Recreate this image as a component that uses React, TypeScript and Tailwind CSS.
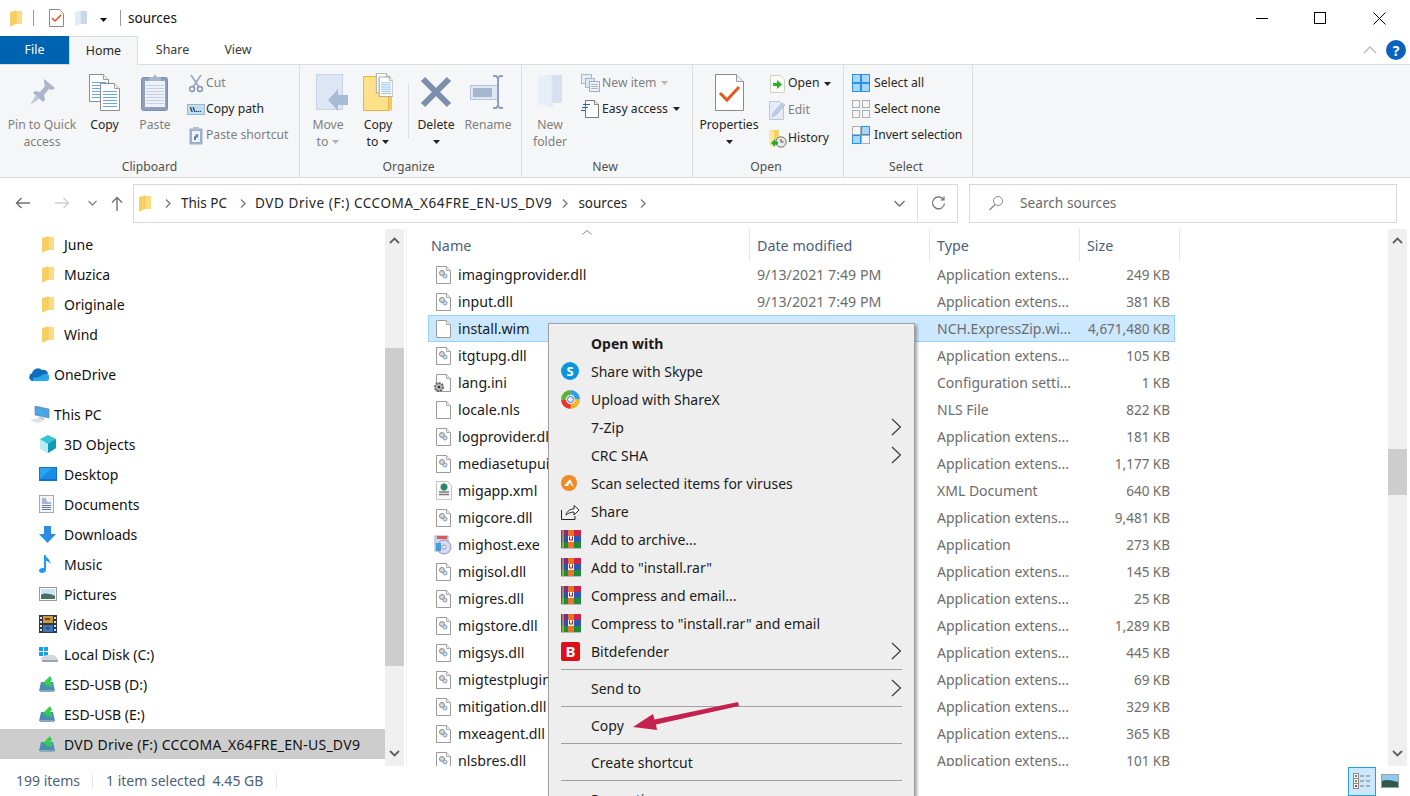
import React from "react";

const Svg = ({ w, h, children, className = "" }: { w: number; h: number; children: React.ReactNode; className?: string }) => (
  <svg width={w} height={h} viewBox={`0 0 ${w} ${h}`} className={`shrink-0 ${className}`}>{children}</svg>
);

const Folder = ({ pale = false }: { pale?: boolean }) => (
  <Svg w={12} h={17}>
    <path d="M3 1h9v13H3z" fill={pale ? "#c9d7ea" : "#fbdc80"} />
    <path d="M0 2l6-1.500V14L1 16.500 0 16z" fill={pale ? "#e3ebf6" : "#f8cf62"} />
    <path d="M6 .5V14" stroke={pale ? "#d5e0ef" : "#f3c85c"} strokeWidth="1" />
  </Svg>
);

const CheckDoc = ({ big = false }: { big?: boolean }) =>
  big ? (
    <Svg w={29} h={37}>
      <path d="M.5.5h21l7 7v29H.500z" fill="#fff" stroke="#8a8a8a" />
      <path d="M21.500.5v7h7" fill="#ececec" stroke="#9a9a9a" />
      <path d="M5 19l7 7L24 13" fill="none" stroke="#e8591b" strokeWidth="3" />
    </Svg>
  ) : (
    <Svg w={15} h={18}>
      <path d="M.5.5h10l4 4v13H.500z" fill="#fff" stroke="#8a8a8a" />
      <path d="M3 9l3 3 6-6" fill="none" stroke="#e8491b" strokeWidth="1.500" />
    </Svg>
  );

const Pin = () => (
  <Svg w={28} h={28}>
    <path d="M16 1l11 9-3 2-3-1-5 6 1 5-2 2-10-9 2-2 5 1 5-6-1-4z" fill="#a9b6cc" />
    <path d="M8 17l4 3-10 7z" fill="#bcc6d8" />
  </Svg>
);

const Doc = ({ x, y }: { x: number; y: number }) => (
  <g transform={`translate(${x} ${y})`}>
    <path d="M.5.5h14l5 5v22H.500z" fill="#fff" stroke="#8d8d8d" />
    <path d="M14.500.5v5h5" fill="#ececec" stroke="#a0a0a0" />
    {[8, 11, 14, 17, 20, 23].map((l) => (
      <path key={l} d={`M3 ${l + 0.5}h14`} stroke="#6aa5ea" />
    ))}
  </g>
);

const CopyBig = () => (
  <Svg w={31} h={37}>
    <Doc x={0} y={0} />
    <Doc x={11} y={9} />
  </Svg>
);

const Clipboard = () => (
  <Svg w={28} h={38}>
    <rect x=".5" y="4.500" width="26" height="33" rx="2" fill="#8ea0bd" stroke="#7c8fae" />
    <rect x="4" y="8" width="20" height="26" fill="#eef1f7" />
    {[12, 15, 18, 21, 24, 27, 30].map((l) => (
      <path key={l} d={`M5 ${l + 0.5}h18`} stroke="#c6d0e2" />
    ))}
    <path d="M8 8V4h4l2-3 2 3h4v4z" fill="#a8b6cd" />
  </Svg>
);

const Scissors = () => (
  <Svg w={14} h={19}>
    <path d="M2 1l8 12M12 1L4 13" stroke="#9aa7bd" strokeWidth="1.600" fill="none" />
    <circle cx="3" cy="15" r="2.500" fill="none" stroke="#8093b3" strokeWidth="1.500" />
    <circle cx="11" cy="15" r="2.500" fill="none" stroke="#8093b3" strokeWidth="1.500" />
  </Svg>
);

const CopyPathIcon = () => (
  <div className="w-[18px] h-[11px] bg-[#bcdff7] border border-[#9cb5d0] flex items-center justify-center overflow-hidden text-[7px] leading-none font-bold text-black">
    \\...
  </div>
);

const PasteShortcut = () => (
  <Svg w={14} h={19}>
    <rect x=".5" y="2.500" width="13" height="16" fill="#9eb0c9" />
    <rect x="3" y="5" width="8" height="11" fill="#eef1f7" />
    <path d="M4 1h6v3H4z" fill="#b3bfd2" />
    <path d="M5 14v-3l2-2h-2l4-1v4l-1-1-1 1v2z" fill="#5d7fb0" />
  </Svg>
);

const MoveTo = () => (
  <Svg w={33} h={37}>
    <rect x=".5" y=".5" width="26" height="35" fill="#dde6f4" stroke="#c7d4e8" />
    <path d="M12 26l10-11v6h10v10H22v6z" fill="#a9bad6" />
  </Svg>
);

const CopyTo = () => (
  <Svg w={30} h={38}>
    <path d="M.5 3.500h25v34H.500z" fill="#fde08a" stroke="#e2b840" />
    <path d="M26 18l3 3v16.500h-3z" fill="#f3c85c" />
    <g transform="translate(13 0) scale(.72)">
      <Doc x={0} y={0} />
      <Doc x={4} y={5} />
    </g>
  </Svg>
);

const DeleteX = () => (
  <Svg w={32} h={32}>
    <path d="M3 3l26 26M29 3L3 29" stroke="#7d8fae" strokeWidth="6" />
  </Svg>
);

const RenameIcon = () => (
  <Svg w={36} h={34}>
    <rect x=".5" y="10.500" width="27" height="14" fill="#dfe7f3" stroke="#b5c4dc" />
    <rect x="3" y="13" width="19" height="9" fill="#a7b6cf" />
    <path d="M23 1h3l2 2 2-2h3M28 3v28M23 33h3l2-2 2 2h3" stroke="#8d9fbd" strokeWidth="2" fill="none" />
  </Svg>
);

const NewFolder = () => (
  <Svg w={25} h={36}>
    <path d="M8 1h16v27h1l-2 1H8z" fill="#d6e0ef" />
    <path d="M0 3l14-2v33L1 30l-1-2z" fill="#e8eef7" />
    <path d="M14 1v33" stroke="#dde6f2" />
  </Svg>
);

const NewItem = () => (
  <Svg w={19} h={18}>
    <rect x=".5" y=".5" width="10" height="9" fill="#e7edf6" stroke="#a9b6ca" />
    <rect x="4.500" y="4.500" width="9" height="9" fill="#dde5f0" stroke="#a9b6ca" />
    <rect x="8.500" y="7.500" width="10" height="10" fill="#eef1f6" stroke="#a0aec4" />
    <path d="M10 10.500h7M10 12.500h7M10 14.500h7" stroke="#a9b6ca" />
  </Svg>
);

const EasyAccess = () => (
  <Svg w={18} h={18}>
    <path d="M4.500.5h9l4 4v13h-13z" fill="#fff" stroke="#777" />
    <path d="M13.500.5v4h4" fill="#ececec" stroke="#888" />
    <path d="M2 4.500h7M1 7.500h6M0 10.500h4" stroke="#1f66b0" strokeWidth="1.200" />
  </Svg>
);

const OpenIcon = () => (
  <Svg w={16} h={18}>
    <path d="M.5.5h10l4 4v13H.500z" fill="#fbfbf4" stroke="#cfcfc8" />
    <path d="M3 8h4V5l5 4.500L7 14v-3H3z" fill="#23b525" />
  </Svg>
);

const EditIcon = () => (
  <Svg w={17} h={19}>
    <path d="M.5.5h10l4 4v14H.500z" fill="#e5ecf7" stroke="#b9c6dc" />
    <path d="M3 16l1-4 9-10 3 2-9 10z" fill="#bccde6" stroke="#a6b7d2" strokeWidth=".6" />
  </Svg>
);

const HistoryIcon = () => (
  <Svg w={18} h={19}>
    <path d="M0 1l10 0v15H0z" fill="#f9cf62" />
    <path d="M0 1l5 1v16l-5-2z" fill="#fde6a4" />
    <circle cx="12" cy="13" r="5.200" fill="#e8e8e8" stroke="#777" />
    <path d="M12 10v3h2.500" stroke="#555" fill="none" />
    <path d="M2 14l4-4v2.500h3v3H6V18z" fill="#27a92a" />
  </Svg>
);

const Grid = ({ on, gap = false }: { on: boolean[]; gap?: boolean }) => (
  <Svg w={18} h={18}>
    {[0, 1, 2, 3].map((i) => {
      const far = gap ? 10.5 : 9.5;
      const size = gap ? 7 : 8;
      const x = i % 2 === 0 ? 0.5 : far;
      const y = i < 2 ? 0.5 : far;
      return <rect key={i} x={x} y={y} width={size} height={size} fill={on[i] ? "#a6d8fb" : "#f5f6f7"} stroke={on[i] ? "#2b91e8" : "#adadad"} />;
    })}
  </Svg>
);

const Caret = ({ color = "#222", className = "" }: { color?: string; className?: string }) => (
  <svg width="7" height="4" viewBox="0 0 7 4" className={`shrink-0 ${className}`}><path d="M0 0h7L3.500 4z" fill={color} /></svg>
);

const Chev = ({ color = "#777" }: { color?: string }) => (
  <svg width="6" height="9" viewBox="0 0 6 9" className="shrink-0"><path d="M1 .5l4 4-4 4" fill="none" stroke={color} strokeWidth="1.300" /></svg>
);

const Big = ({ w, icon, l1, l2, off = false, caret = false }: { w: number; icon: React.ReactNode; l1: string; l2?: string; off?: boolean; caret?: boolean }) => (
  <div className={`flex flex-col items-center shrink-0 ${off ? "text-[#7f7f7f]" : "text-[#262626]"}`} style={{ width: w }}>
    <div className="h-[42px] flex items-center justify-center">{icon}</div>
    <div className="h-[17px] leading-[17px] whitespace-nowrap mt-[3px]">{l1}</div>
    {l2 !== undefined ? (
      <div className="h-[17px] leading-[17px] whitespace-nowrap flex items-center gap-[4px]">
        {l2}
        {caret && <Caret color={off ? "#b0b0b0" : "#222"} />}
      </div>
    ) : (
      caret && <div className="h-[17px] flex items-center"><Caret /></div>
    )}
  </div>
);

const Small = ({ icon, label, off = false, caret, iw = 21, h = 26 }: { icon: React.ReactNode; label: string; off?: boolean; caret?: string; iw?: number; h?: number }) => (
  <div className={`flex items-center whitespace-nowrap ${off ? "text-[#7f7f7f]" : "text-[#262626]"}`} style={{ height: h }}>
    <div className="flex items-center justify-center shrink-0" style={{ width: iw }}>{icon}</div>
    <span>{label}</span>
    {caret && <Caret color={caret} className="ml-[5px]" />}
  </div>
);

const Group = ({ w, label, children, shift = true }: { w: number; label: string; children: React.ReactNode; shift?: boolean }) => (
  <div className="relative flex flex-col h-full shrink-0 border-r border-[#dcdddf]" style={{ width: w }}>
    <div className="flex h-[91px] pt-[6px]">{children}</div>
    <div className={`text-center text-[#4f4f4f] leading-[17px] mt-[2px] ${shift ? "pr-[4px]" : ""}`}>{label}</div>
  </div>
);

const DllIcon = () => (
  <Svg w={15} h={18}>
    <path d="M.5.5h10l4 4v13H.500z" fill="#fff" stroke="#9a9a9a" />
    <path d="M10.500.5v4h4" fill="#eee" stroke="#aaa" />
    <circle cx="6" cy="7" r="2.500" fill="#d6d6d6" stroke="#8b8b8b" />
    <circle cx="9" cy="10" r="2" fill="#cfe2f4" stroke="#7c9cc0" />
  </Svg>
);
const BlankIcon = () => (
  <Svg w={15} h={18}>
    <path d="M.5.5h10l4 4v13H.500z" fill="#fff" stroke="#9a9a9a" />
    <path d="M10.500.5v4h4" fill="#eee" stroke="#aaa" />
  </Svg>
);
const IniIcon = () => (
  <div className="relative w-[15px] h-[18px]">
    <BlankIcon />
    <svg width="12" height="12" viewBox="0 0 12 12" className="absolute -left-[3px] top-[7px]">
      <circle cx="6" cy="6" r="4" fill="#bbb" stroke="#666" strokeWidth="2" strokeDasharray="2 1" />
      <circle cx="6" cy="6" r="1.300" fill="#333" />
    </svg>
  </div>
);
const XmlIcon = () => (
  <Svg w={16} h={19}>
    <path d="M.5.5h11l4 4v14H.500z" fill="#fafafa" stroke="#c4c4c4" />
    <circle cx="8" cy="6" r="3.500" fill="#2a9a3e" />
    <path d="M5 6h6M8 2.500v7" stroke="#2566c4" />
    <path d="M3 11h10M3 13.500h10" stroke="#777" strokeWidth="1.500" />
  </Svg>
);
const ExeIcon = () => (
  <Svg w={20} h={20} className="-ml-[3px]">
    <rect x="2" y="1" width="13" height="15" fill="#cfdcec" stroke="#9bb0c9" />
    <path d="M4 1h10v3H4z" fill="#d65b52" />
    <circle cx="11" cy="12" r="7" fill="#dcd8f2" stroke="#8f8fc0" />
    <circle cx="11" cy="12" r="2" fill="#fff" stroke="#8f8fc0" />
    <path d="M3 8h5v8H3z" fill="#3f9fdc" />
  </Svg>
);

type Row = [string, string, string, "dll" | "blank" | "ini" | "xml" | "exe"];
const AE = "Application extens...";
const rows: Row[] = [
  ["imagingprovider.dll", AE, "249 KB", "dll"],
  ["input.dll", AE, "381 KB", "dll"],
  ["install.wim", "NCH.ExpressZip.wi...", "4,671,480 KB", "blank"],
  ["itgtupg.dll", AE, "105 KB", "dll"],
  ["lang.ini", "Configuration setti...", "1 KB", "ini"],
  ["locale.nls", "NLS File", "822 KB", "blank"],
  ["logprovider.dll", AE, "181 KB", "dll"],
  ["mediasetupuimgr.dll", AE, "1,177 KB", "dll"],
  ["migapp.xml", "XML Document", "640 KB", "xml"],
  ["migcore.dll", AE, "9,481 KB", "dll"],
  ["mighost.exe", "Application", "273 KB", "exe"],
  ["migisol.dll", AE, "145 KB", "dll"],
  ["migres.dll", AE, "25 KB", "dll"],
  ["migstore.dll", AE, "1,289 KB", "dll"],
  ["migsys.dll", AE, "445 KB", "dll"],
  ["migtestplugin.dll", AE, "69 KB", "dll"],
  ["mitigation.dll", AE, "329 KB", "dll"],
  ["mxeagent.dll", AE, "365 KB", "dll"],
  ["nlsbres.dll", AE, "101 KB", "dll"],
];
const fileIcon = (k: Row[3]) =>
  k === "dll" ? <DllIcon /> : k === "blank" ? <BlankIcon /> : k === "ini" ? <IniIcon /> : k === "xml" ? <XmlIcon /> : <ExeIcon />;

const Cube = () => (
  <Svg w={18} h={18}>
    <path d="M9 0l8 4v9l-8 5-8-5V4z" fill="#35c1d6" />
    <path d="M1 4l8 5v9l-8-5z" fill="#b8edf2" />
    <path d="M9 9l8-5v9l-8 5z" fill="#0f9bb5" />
  </Svg>
);
const Desk = () => (
  <Svg w={18} h={14}>
    <rect width="18" height="14" fill="#0a74d6" />
    <rect x="1" y="1" width="16" height="11" fill="#2ba4f2" />
    <path d="M1 12L13 1h4v11z" fill="#1a8ce4" />
  </Svg>
);
const Docs = () => (
  <Svg w={15} h={18}>
    <rect x=".5" y=".5" width="14" height="17" fill="#f4f4f4" stroke="#a8a8a8" />
    <path d="M3 4h4M3 6h5M3 8h9M3 10.500h9M3 12.500h9M3 14.500h9" stroke="#5b7aa6" />
  </Svg>
);
const Dl = () => (
  <Svg w={17} h={17}>
    <path d="M5 0h7v8h5l-8.500 9L0 8h5z" fill="#2a8fe3" />
  </Svg>
);
const Note = () => (
  <Svg w={12} h={18}>
    <path d="M5 0h1.500c.5 3 5 4 5 9-1-2-3-3-4.500-3v9c0 2-2 3-4 3s-3-1-3-2.500S2 12.500 5 13z" fill="#1b9df0" />
  </Svg>
);
const Pic = () => (
  <Svg w={18} h={14}>
    <rect x=".5" y=".5" width="17" height="13" fill="#fff" stroke="#9a9a9a" />
    <rect x="2" y="2" width="14" height="10" fill="#c8e3f2" />
    <path d="M2 8c3-2 7-2 14 1v3H2z" fill="#46705f" />
  </Svg>
);
const Film = () => (
  <Svg w={18} h={18}>
    <rect width="18" height="18" fill="#33373d" />
    <rect x="4" y="1" width="10" height="7" fill="#c89a3a" />
    <rect x="4" y="10" width="10" height="7" fill="#2f76c7" />
    <path d="M6 4h5M7 13h3" stroke="#7c3a2a" strokeWidth="2" />
    {[2, 6, 10, 14].map((y) => (
      <g key={y}><rect x="1" y={y} width="2" height="2" fill="#ddd" /><rect x="15" y={y} width="2" height="2" fill="#ddd" /></g>
    ))}
  </Svg>
);
const Disk = () => (
  <Svg w={19} h={15}>
    <rect x="0" y="0" width="4" height="4" fill="#13a2e8" />
    <rect x="5" y="0" width="4" height="4" fill="#13a2e8" />
    <rect x="0" y="5" width="4" height="4" fill="#13a2e8" />
    <rect x="5" y="5" width="4" height="4" fill="#13a2e8" />
    <path d="M2 11l5-3h8l4 4v2H3z" fill="#d4d7da" />
    <path d="M3 13h16v2H3z" fill="#9ea3a8" />
  </Svg>
);
const Esd = () => (
  <Svg w={16} h={16}>
    <path d="M2 6h12l2 9H0z" fill="#4a8cb8" />
    <path d="M1 14h14v2H1z" fill="#8da7b8" />
    <path d="M11 0L5 6l-2 1 4 1v3l2-2 4 3V8l-2-2 2-2z" fill="#33d04a" />
  </Svg>
);
const Cloud = () => (
  <Svg w={20} h={14}>
    <path d="M4 14a4 4 0 01-1-7.800A6 6 0 0113 3a4.500 4.500 0 016 4z" fill="#0f6cbd" />
    <path d="M4 14h13a3 3 0 000-7c-3 0-5 2-7 3l-6 1z" fill="#28a8ea" />
  </Svg>
);
const Pc = () => (
  <Svg w={20} h={17}>
    <path d="M5 0l14 3v9L5 9z" fill="#4aa5e8" stroke="#5a7d9c" strokeWidth=".6" />
    <path d="M9 11l5 1v2H9z" fill="#b6bcc4" />
    <path d="M0 14l9-2 7 2-9 3z" fill="#dde0e4" />
  </Svg>
);

const navTop: [string, React.ReactNode][] = [
  ["June", <Folder />],
  ["Muzica", <Folder />],
  ["Originale", <Folder />],
  ["Wind", <Folder />],
];
const navPc: [string, React.ReactNode][] = [
  ["3D Objects", <Cube />],
  ["Desktop", <Desk />],
  ["Documents", <Docs />],
  ["Downloads", <Dl />],
  ["Music", <Note />],
  ["Pictures", <Pic />],
  ["Videos", <Film />],
  ["Local Disk (C:)", <Disk />],
  ["ESD-USB (D:)", <Esd />],
  ["ESD-USB (E:)", <Esd />],
];

const NavRow = ({ icon, label, sel = false, indent = 39, iw = 25, wide = false }: { icon: React.ReactNode; label: string; sel?: boolean; indent?: number; iw?: number; wide?: boolean }) => (
  <div className={`flex items-center h-[30px] whitespace-nowrap text-[#111] ${sel ? "bg-[#cdcdcd]" : ""}`} style={{ paddingLeft: indent }}>
    <div className="flex items-center justify-start shrink-0" style={{ width: iw }}>{icon}</div>
    <span className={`pt-px ${wide ? "tracking-[0.27px]" : ""}`}>{label}</span>
  </div>
);

const SkypeIcon = () => (
  <div className="w-[18px] h-[18px] rounded-full bg-[#0a97dd] text-white font-bold text-[13px] leading-none flex items-center justify-center">S</div>
);
const ShareX = () => (
  <Svg w={19} h={19}>
    <path d="M9.500 0a9.500 9.500 0 019.500 9.500h-5a5 5 0 00-5-5z" fill="#2e9fe6" />
    <path d="M19 9.500a9.500 9.500 0 01-9.500 9.500v-5a5 5 0 005-5z" fill="#f0b81e" />
    <path d="M9.500 19A9.500 9.500 0 010 9.500h5a5 5 0 005 5z" fill="#e8352c" />
    <path d="M0 9.500A9.500 9.500 0 019.500 0v5a5 5 0 00-5 5z" fill="#5cb531" />
    <circle cx="9.500" cy="9.500" r="3" fill="#eee" stroke="#2e6fe6" />
  </Svg>
);
const ScanIcon = () => (
  <Svg w={16} h={16}>
    <circle cx="8" cy="8" r="8" fill="#f08a24" />
    <path d="M3 11l6-7 4 8-3-2-1-3-2 4z" fill="#fff" />
  </Svg>
);
const ShareIcon = () => (
  <Svg w={19} h={17}>
    <path d="M.5 7v9.500H14V13" fill="none" stroke="#222" />
    <path d="M5 12c1-4 4-6 8-6V2.500L18 7l-5 5V9c-3 0-6 1-8 3z" fill="#fff" stroke="#222" />
  </Svg>
);
const Rar = () => (
  <Svg w={20} h={19}>
    <rect x="0" y="0" width="7" height="6" fill="#7b2d83" />
    <rect x="7" y="0" width="6" height="6" fill="#e8742a" />
    <rect x="13" y="0" width="7" height="6" fill="#c9244a" />
    <rect x="0" y="6" width="7" height="6" fill="#3350a8" />
    <rect x="7" y="6" width="6" height="6" fill="#fbe9d9" />
    <rect x="13" y="6" width="7" height="6" fill="#2d57b4" />
    <rect x="0" y="12" width="7" height="6" fill="#238a3a" />
    <rect x="7" y="12" width="6" height="6" fill="#e8742a" />
    <rect x="13" y="12" width="7" height="6" fill="#238a3a" />
    <path d="M2 0v18" stroke="#f0d24a" />
    <path d="M8.500 6.500v3.500h3V6.500" fill="none" stroke="#7b2d2d" />
    <rect y="18" width="20" height="1" fill="#bbb" />
  </Svg>
);
const BitD = () => (
  <div className="w-[19px] h-[19px] rounded-[2px] bg-[#dd0f18] text-white font-bold text-[15px] leading-none flex items-center justify-center">B</div>
);
const MenuChev = () => (
  <svg width="11" height="18" viewBox="0 0 11 18" className="shrink-0"><path d="M1 1l8.500 8L1 17" fill="none" stroke="#333" strokeWidth="1.100" /></svg>
);

const MenuRow = ({ icon, label, sub = false, bold = false }: { icon?: React.ReactNode; label: string; sub?: boolean; bold?: boolean }) => (
  <div className={`flex items-center h-[28px] pl-[12px] pr-[12px] whitespace-nowrap text-[#1c1c1c] ${bold ? "font-bold" : ""}`}>
    <div className="w-[30px] shrink-0 flex items-center">{icon}</div>
    <span className="flex-1 pt-px">{label}</span>
    {sub && <MenuChev />}
  </div>
);
const MenuSep = () => (
  <div className="h-[9px] flex items-center px-[12px]"><div className="w-full h-px bg-[#a0a0a0]" /></div>
);

const ScrollUp = () => (
  <svg width="11" height="7" viewBox="0 0 11 7"><path d="M1 6l4.500-4.500L10 6" fill="none" stroke="#606060" strokeWidth="1.800" /></svg>
);
const ScrollDown = () => (
  <svg width="11" height="7" viewBox="0 0 11 7"><path d="M1 1l4.500 4.500L10 1" fill="none" stroke="#606060" strokeWidth="1.800" /></svg>
);

export default function App() {
  return (
    <div className="relative w-[1410px] h-[796px] overflow-hidden bg-white text-[14px] font-['Noto_Sans','Open_Sans',sans-serif]">
      {/* title */}
      <div className="flex items-center h-[36px] pl-[10px]">
        <Folder />
        <div className="w-px h-[16px] bg-[#9a9a9a] ml-[11px] mr-[15px]" />
        <CheckDoc />
        <div className="ml-[11px]"><Folder pale /></div>
        <Caret className="ml-[13px] mt-[3px]" color="#111" />
        <div className="w-px h-[16px] bg-[#9a9a9a] ml-[13px] mr-[7px]" />
        <span className="text-[#111] text-[13.500px]">sources</span>
        <div className="flex-1" />
        <div className="w-[12px] h-px bg-black mr-[46px]" />
        <div className="w-[12px] h-[12px] border border-black mr-[47px]" />
        <svg width="13" height="13" viewBox="0 0 13 13" className="mr-[24px]"><path d="M.5.5l12 12M12.500.5l-12 12" stroke="#000" /></svg>
      </div>
      {/* tabs */}
      <div className="flex items-center h-[29px] border-b border-[#dadbdc] text-[12.400px]">
        <div className="w-[69px] h-[28px] bg-[#0063b1] text-white flex items-center justify-center pt-px">File</div>
        <div className="relative w-[69px] h-[29px] bg-[#f5f6f7] border-t border-x border-[#dadbdc] text-[#262626] flex items-center justify-center pt-px">Home</div>
        <div className="w-[69px] text-center text-[#3a3a3a] pt-px">Share</div>
        <div className="w-[62px] text-center text-[#3a3a3a] pt-px">View</div>
        <div className="flex-1" />
        <svg width="14" height="8" viewBox="0 0 14 8" className="mr-[9px]"><path d="M1 7l6-6 6 6" fill="none" stroke="#b9b9b9" strokeWidth="1.300" /></svg>
        <div className="w-[20px] h-[20px] rounded-full bg-[#0a63bf] text-white font-bold text-[14px] flex items-center justify-center mr-[4px]">?</div>
      </div>
      {/* ribbon */}
      <div className="flex h-[113px] bg-[#f5f6f7] border-b border-[#dadbdc] text-[12.200px]">
        <Group w={300} label="Clipboard" shift={false}>
          <Big w={84} icon={<Pin />} l1="Pin to Quick" l2="access" off />
          <Big w={41} icon={<CopyBig />} l1="Copy" />
          <div className="w-[10px]" />
          <Big w={40} icon={<Clipboard />} l1="Paste" off />
          <div className="flex flex-col pl-[10px] -mt-px">
            <Small icon={<Scissors />} label="Cut" off />
            <Small icon={<CopyPathIcon />} label="Copy path" />
            <Small icon={<PasteShortcut />} label="Paste shortcut" off />
          </div>
        </Group>
        <Group w={222} label="Organize">
          <Big w={56} icon={<div className="ml-[8px]"><MoveTo /></div>} l1="Move" l2="to" off caret />
          <Big w={44} icon={<CopyTo />} l1="Copy" l2="to" caret />
          <div className="w-px h-[55px] bg-[#dcdddf] mt-[12px] mx-[8px]" />
          <Big w={38} icon={<DeleteX />} l1="Delete" caret />
          <Big w={66} icon={<RenameIcon />} l1="Rename" off />
        </Group>
        <Group w={171} label="New">
          <Big w={56} icon={<NewFolder />} l1="New" l2="folder" off />
          <div className="flex flex-col -mt-px">
            <Small icon={<NewItem />} label="New item" off caret="#b5b5b5" iw={24} />
            <Small icon={<EasyAccess />} label="Easy access" caret="#222" iw={24} />
          </div>
        </Group>
        <Group w={151} label="Open">
          <Big w={72} icon={<CheckDoc big />} l1="Properties" caret />
          <div className="flex flex-col pl-[2px] -mt-[1px]">
            <Small icon={<OpenIcon />} label="Open" caret="#222" h={27} />
            <Small icon={<EditIcon />} label="Edit" off h={27} />
            <Small icon={<HistoryIcon />} label="History" h={28} />
          </div>
        </Group>
        <Group w={129} label="Select">
          <div className="flex flex-col pl-[8px] -mt-px">
            <Small icon={<div className="w-[22px]"><Grid on={[true, true, true, true]} /></div>} label="Select all" iw={22} />
            <Small icon={<div className="w-[22px]"><Grid on={[false, false, false, false]} gap /></div>} label="Select none" iw={22} />
            <Small icon={<div className="w-[22px]"><Grid on={[false, true, true, false]} /></div>} label="Invert selection" iw={22} />
          </div>
        </Group>
      </div>
      {/* address */}
      <div className="flex items-center h-[50px] pl-[15px]">
        <svg width="16" height="12" viewBox="0 0 16 12" className="shrink-0"><path d="M15 6H1.500M6.500 1l-5 5 5 5" fill="none" stroke="#6e6e6e" strokeWidth="1.400" /></svg>
        <svg width="16" height="12" viewBox="0 0 16 12" className="shrink-0 ml-[23px]"><path d="M1 6h13.500M9.500 1l5 5-5 5" fill="none" stroke="#cfcfcf" strokeWidth="1.400" /></svg>
        <svg width="9" height="6" viewBox="0 0 9 6" className="shrink-0 ml-[18px]"><path d="M.5 1l4 4 4-4" fill="none" stroke="#8a8a8a" strokeWidth="1.400" /></svg>
        <svg width="12" height="15" viewBox="0 0 12 15" className="shrink-0 ml-[14px]"><path d="M6 15V1.500M1 6.500l5-5 5 5" fill="none" stroke="#6e6e6e" strokeWidth="1.400" /></svg>
        <div className="ml-[10px] w-[825px] h-[39px] border border-[#d9d9d9] flex items-center pl-[5px] text-[#262626] text-[13.500px] whitespace-nowrap">
          <Folder />
          <div className="ml-[14px] mr-[10px]"><Chev /></div>
          <span>This PC</span>
          <div className="ml-[13px] mr-[9px]"><Chev /></div>
          <span className="tracking-[0.57px]">DVD Drive (F:) CCCOMA_X64FRE_EN-US_DV9</span>
          <div className="ml-[10px] mr-[10px]"><Chev /></div>
          <span>sources</span>
          <div className="ml-[13px]"><Chev /></div>
          <div className="flex-1" />
          <svg width="11" height="7" viewBox="0 0 11 7" className="shrink-0"><path d="M.5 1l5 5 5-5" fill="none" stroke="#6e6e6e" strokeWidth="1.300" /></svg>
          <div className="w-px h-[38px] bg-[#e0e0e0] ml-[12px]" />
          <svg width="15" height="15" viewBox="0 0 15 15" className="shrink-0 ml-[13px] mr-[11px]"><path d="M12.500 3.500A6 6 0 1013.500 7.500M13 .5v3.500H9.500" fill="none" stroke="#6e6e6e" strokeWidth="1.200" /></svg>
        </div>
        <div className="ml-[11px] w-[428px] h-[39px] border border-[#d9d9d9] flex items-center pl-[18px] text-[#6a6a6a] text-[13.700px]">
          <svg width="16" height="16" viewBox="0 0 16 16" className="shrink-0"><circle cx="10" cy="6" r="4.500" fill="none" stroke="#8a8a8a" /><path d="M7 9.500L1.500 15" stroke="#8a8a8a" strokeWidth="1.400" /></svg>
          <span className="ml-[16px]">Search sources</span>
        </div>
      </div>
      {/* content */}
      <div className="flex h-[538px]">
        <div className="w-[385px] shrink-0 h-full pt-[1px] overflow-hidden">
          {navTop.map(([l, i]) => (
            <NavRow key={l} icon={i} label={l} indent={42} iw={22} />
          ))}
          <div className="h-[10px]" />
          <NavRow icon={<Cloud />} label="OneDrive" indent={29} />
          <div className="h-[10px]" />
          <NavRow icon={<Pc />} label="This PC" indent={30} iw={24} />
          {navPc.map(([l, i]) => (
            <NavRow key={l} icon={i} label={l} />
          ))}
          <NavRow icon={<Esd />} label="DVD Drive (F:) CCCOMA_X64FRE_EN-US_DV9" sel wide />
        </div>
        <div className="w-[19px] shrink-0 h-[537px] flex flex-col bg-[#f0f0f0] mt-px">
          <div className="h-[119px] flex pt-[8px] justify-center"><ScrollUp /></div>
          <div className="h-[318px] bg-[#cdcdcd]" />
          <div className="flex-1 flex items-end pb-[9px] justify-center"><ScrollDown /></div>
        </div>
        <div className="w-[3px] shrink-0 border-r border-[#f0f0f0]" />
        <div className="w-[981px] shrink-0 h-full pl-[21px] overflow-hidden">
          <div className="relative flex h-[33px] pt-[1px] text-[#4c607a] text-[14.300px]">
            <div className="w-[322px] h-[32px] border-r border-[#e5e5e5] pl-[3px] leading-[34px]">Name</div>
            <div className="w-[180px] h-[32px] border-r border-[#e5e5e5] pl-[7px] leading-[34px]">Date modified</div>
            <div className="w-[150px] h-[32px] border-r border-[#e5e5e5] pl-[7px] leading-[34px]">Type</div>
            <div className="w-[100px] h-[32px] border-r border-[#e5e5e5] pl-[7px] leading-[34px]">Size</div>
            <svg width="10" height="5" viewBox="0 0 10 5" className="absolute left-[154px] top-[2px]"><path d="M.5 4.500L5 .5l4.500 4" fill="none" stroke="#8a8a8a" /></svg>
          </div>
          {rows.map(([n, t, s, k], i) => {
            const sel = n === "install.wim";
            return (
              <div key={n} className={`flex items-center h-[27px] w-[747px] border whitespace-nowrap leading-[22px] ${sel ? "bg-[#cce8ff] border-[#99d1ff]" : "border-transparent"}`}>
                <div className="w-[29px] pl-[7px] shrink-0 flex items-center">{fileIcon(k)}</div>
                <div className="w-[299px] h-[22px] shrink-0 text-[#1a1a1a] text-[14.200px] overflow-hidden">{n}</div>
                <div className="w-[180px] h-[22px] shrink-0 text-[#6d6d6d] text-[14.200px]">{i < 2 ? "9/13/2021 7:49 PM" : ""}</div>
                <div className="w-[141px] h-[22px] shrink-0 text-[#6d6d6d] text-[14px]">{t}</div>
                <div className="w-[92px] h-[22px] shrink-0 text-right text-[#6d6d6d] text-[13.500px]">{s}</div>
              </div>
            );
          })}
        </div>
        <div className="w-[19px] shrink-0 h-[537px] flex flex-col bg-[#f0f0f0] mt-px">
          <div className="h-[220px] flex pt-[8px] justify-center"><ScrollUp /></div>
          <div className="h-[46px] bg-[#cdcdcd]" />
          <div className="flex-1 flex items-end pb-[9px] justify-center"><ScrollDown /></div>
        </div>
      </div>
      {/* status */}
      <div className="flex items-center h-[30px] pl-[16px] text-[#4c607a] whitespace-nowrap">
        <span className="w-[76px] -mt-[2px]">199 items</span>
        <div className="w-px h-[14px] bg-[#e5e5e5]" />
        <span className="ml-[13px] w-[170px] -mt-[2px]">1 item selected&nbsp; 4.45 GB</span>
        <div className="w-px h-[14px] bg-[#e5e5e5]" />
        <div className="flex-1" />
        <div className="w-[28px] h-[29px] bg-[#cce8ff] border border-[#26a0da] flex items-center justify-center">
          <svg width="18" height="16" viewBox="0 0 18 16">
            <rect x=".5" y=".5" width="5" height="15" fill="#fff" stroke="#888" />
            <path d="M.5 5.500h5M.5 10.500h5" stroke="#888" />
            <rect x="2" y="2" width="2" height="2" fill="#3a8a9a" />
            <rect x="2" y="7" width="2" height="2" fill="#7a8a3a" />
            <rect x="2" y="12" width="2" height="2" fill="#c8321e" />
            <path d="M7 3h4M13 3h4M7 8h4M13 8h4M7 13h4M13 13h4" stroke="#777" />
          </svg>
        </div>
        <div className="w-[18px] h-[14px] ml-[5px] mr-[11px] border border-[#a0a0a0] overflow-hidden">
          <svg width="16" height="12" viewBox="0 0 16 12" className="block"><rect width="16" height="12" fill="#8fc9ee" /><path d="M0 6c4-2 9-1 16 1v5H0z" fill="#2e5a4c" /></svg>
        </div>
      </div>
      {/* context menu */}
      <div className="absolute left-[548px] top-[323px] w-[367px] h-[490px] bg-[#eeeeee] border border-[#a0a0a0] pt-[5px] shadow-[2px_2px_3px_rgba(0,0,0,0.35)]">
        <MenuRow label="Open with" bold />
        <MenuRow icon={<SkypeIcon />} label="Share with Skype" />
        <MenuRow icon={<ShareX />} label="Upload with ShareX" />
        <MenuRow label="7-Zip" sub />
        <MenuRow label="CRC SHA" sub />
        <MenuRow icon={<ScanIcon />} label="Scan selected items for viruses" />
        <MenuRow icon={<ShareIcon />} label="Share" />
        <MenuRow icon={<Rar />} label="Add to archive..." />
        <MenuRow icon={<Rar />} label='Add to "install.rar"' />
        <MenuRow icon={<Rar />} label="Compress and email..." />
        <MenuRow icon={<Rar />} label='Compress to "install.rar" and email' />
        <MenuRow icon={<BitD />} label="Bitdefender" sub />
        <MenuSep />
        <MenuRow label="Send to" sub />
        <MenuSep />
        <MenuRow label="Copy" />
        <MenuSep />
        <MenuRow label="Create shortcut" />
        <MenuSep />
        <MenuRow label="Properties" />
      </div>
      {/* annotation arrow */}
      <svg width="112" height="32" viewBox="0 0 112 32" className="absolute left-[630px] top-[700px]">
        <path d="M3 27L23 14l1.500 5.500L108 2l1 4-83 18.500L27 30z" fill="#c5214f" />
      </svg>
    </div>
  );
}
